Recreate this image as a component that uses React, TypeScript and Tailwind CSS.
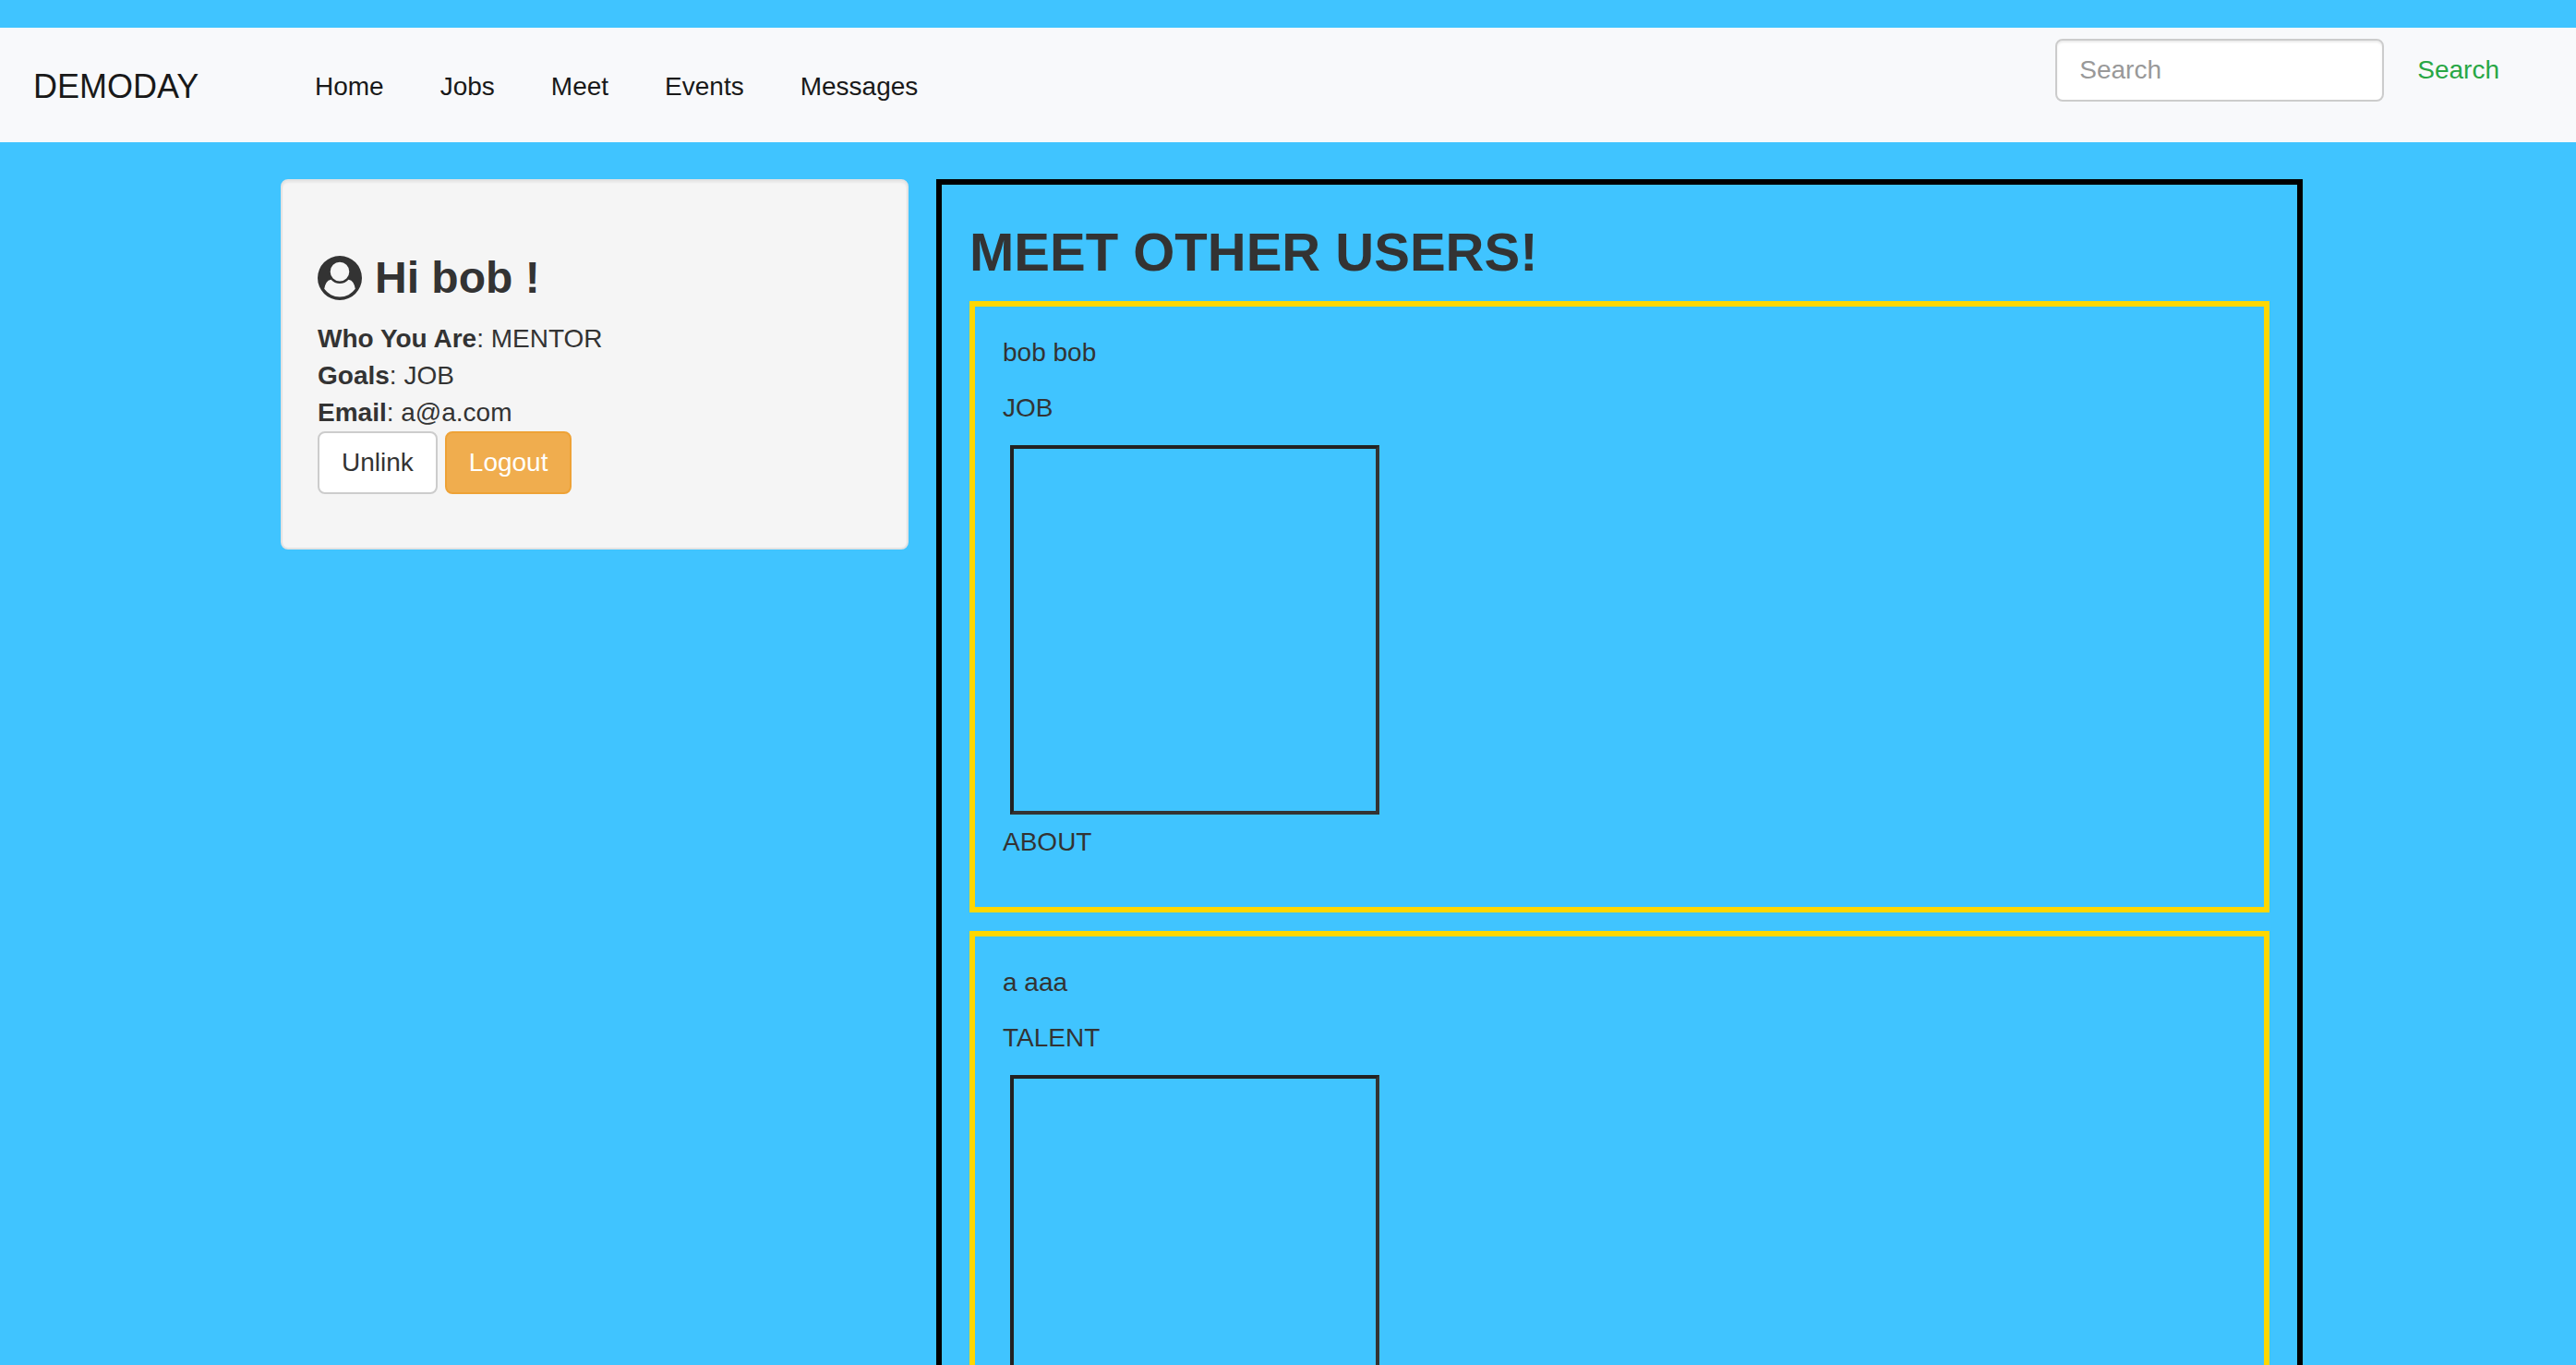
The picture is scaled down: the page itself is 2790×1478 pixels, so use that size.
import React from "react";

const links = ["Home", "Jobs", "Meet", "Events", "Messages"];

const users = [
  { name: "bob bob", goal: "JOB", about: "ABOUT" },
  { name: "a aaa", goal: "TALENT", about: "" },
];

const profile = [
  { label: "Who You Are", value: "MENTOR" },
  { label: "Goals", value: "JOB" },
  { label: "Email", value: "a@a.com" },
];

function UserCircle() {
  return (
    <svg viewBox="0 0 1792 1792" className="size-12 shrink-0 fill-current" aria-hidden="true">
      <path d="M1523 1339q-22-155-87.5-257.5t-184.5-118.5q-67 74-159.5 115.5t-195.5 41.5-195.5-41.5-159.5-115.5q-119 16-184.5 118.5t-87.5 257.5q106 150 271 237.5t356 87.5 356-87.5 271-237.5zm-243-699q0-159-112.5-271.5t-271.5-112.5-271.5 112.5-112.5 271.5 112.5 271.5 271.5 112.5 271.5-112.5 112.5-271.5zm512 256q0 182-71 347.5t-190.5 286-285.5 191.5-349 71q-182 0-348-71t-286-191-191-286-71-348 71-348 191-286 286-191 348-71 348 71 286 191 191 286 71 348z" />
    </svg>
  );
}

function Navbar() {
  return (
    <nav className="flex items-start justify-between bg-[#f8f9fb] pt-3 pr-[57px] pb-10 pl-9 text-[#191919]">
      <div className="flex items-center pt-8">
        <a href="#" className="w-[305px] text-[36px] leading-10">
          DEMODAY
        </a>
        <ul className="flex gap-[61px]">
          {links.map((link) => (
            <li key={link}>
              <a href="#">{link}</a>
            </li>
          ))}
        </ul>
      </div>
      <form className="flex gap-[10px]" onSubmit={(e) => e.preventDefault()}>
        <input
          type="search"
          aria-label="Search"
          placeholder="Search"
          className="h-[68px] w-[356px] rounded-lg border-2 border-[#ccc] bg-white px-6 shadow-[inset_0_2px_2px_rgba(0,0,0,0.075)] outline-none placeholder:text-[#999]"
        />
        <button type="submit" className="h-[68px] px-[26px] text-[#28a745]">
          Search
        </button>
      </form>
    </nav>
  );
}

function ProfileCard() {
  return (
    <section className="rounded-lg border-2 border-[#e3e3e3] bg-[#f5f5f5] px-[38px] pt-[78px] pb-[58px] shadow-[inset_0_2px_2px_rgba(0,0,0,0.05)]">
      <h3 className="mb-5 flex items-center gap-3.5 text-[48px] leading-[53px] font-bold">
        <UserCircle />
        Hi bob !
      </h3>
      {profile.map((row) => (
        <p key={row.label}>
          <strong className="font-bold">{row.label}</strong>: {row.value}
        </p>
      ))}
      <div className="flex gap-2">
        <a href="#" className="rounded-lg border-2 border-[#ccc] bg-white px-6 py-3">
          Unlink
        </a>
        <a href="#" className="rounded-lg border-2 border-[#eea236] bg-[#f0ad4e] px-6 py-3 text-white">
          Logout
        </a>
      </div>
    </section>
  );
}

function UserCard({ name, goal, about }: { name: string; goal: string; about: string }) {
  return (
    <li className="border-[6px] border-[#ffd700] px-[30px] pt-[30px] pb-[50px]">
      <p className="mb-5">{name}</p>
      <p className="mb-5">{goal}</p>
      <div className="mx-2 mb-[10px] size-[400px] border-4 border-t-[#222] border-r-[#333] border-b-[#333] border-l-[#222]" />
      <p className="min-h-10">{about}</p>
    </li>
  );
}

export default function App() {
  return (
    <div className="min-h-screen bg-[#40c4ff] pt-[30px] font-['Liberation_Sans',Arial,sans-serif] text-[28px] leading-10 text-[#333]">
      <Navbar />
      <main className="pt-10 pr-[22px]">
        <div className="mx-auto grid max-w-[2220px] grid-cols-3 items-start">
          <div className="px-[30px]">
            <ProfileCard />
          </div>
          <section className="col-span-2 border-[6px] border-black px-[30px] pt-10 pb-5">
            <h2 className="mb-5 text-[58px] leading-[66px] font-bold">MEET OTHER USERS!</h2>
            <ul className="flex flex-col gap-5">
              {users.map((user) => (
                <UserCard key={user.name} {...user} />
              ))}
            </ul>
          </section>
        </div>
      </main>
    </div>
  );
}
